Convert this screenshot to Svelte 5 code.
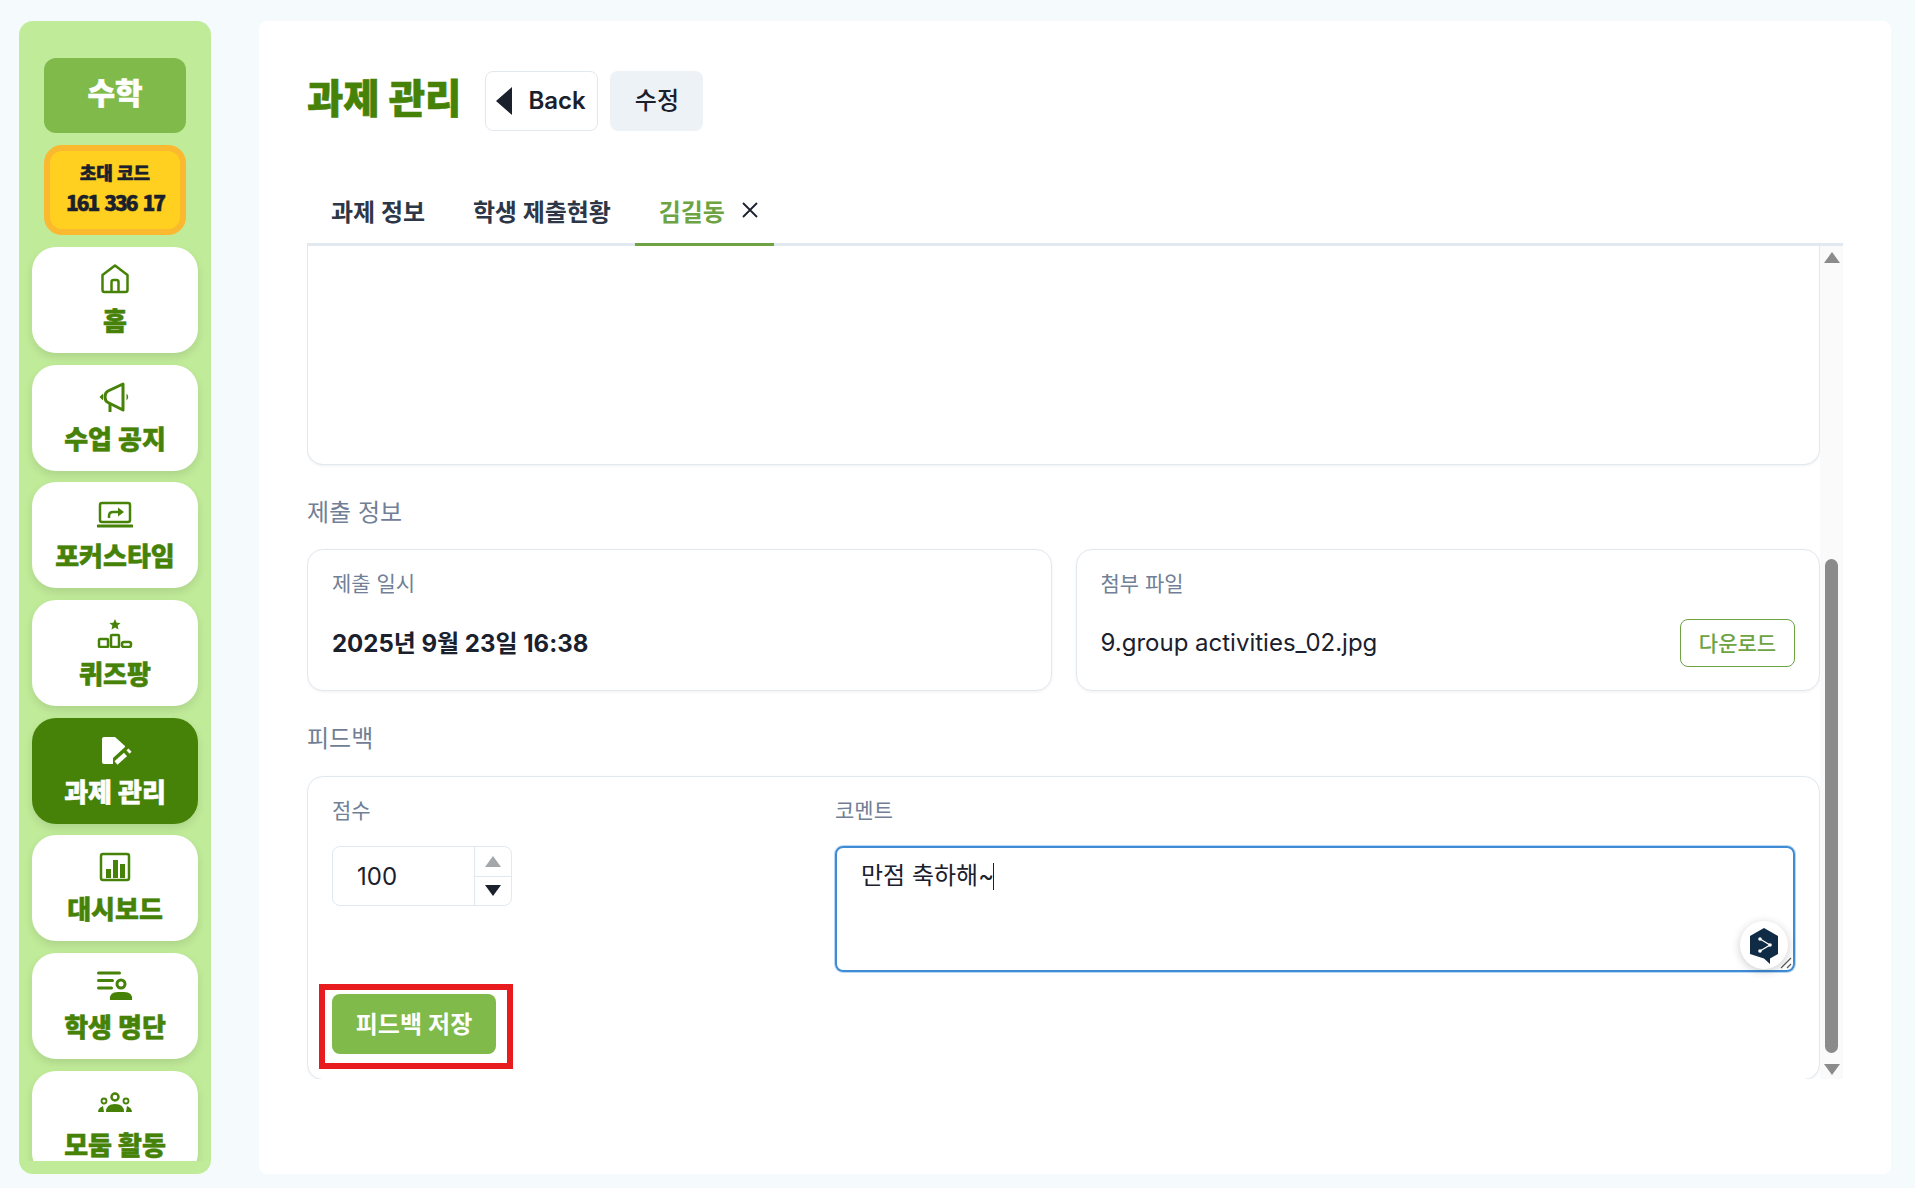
<script>
  const navItems = [
    { key: 'home', label: '홈' },
    { key: 'notice', label: '수업 공지' },
    { key: 'focus', label: '포커스타임' },
    { key: 'quiz', label: '퀴즈팡' },
    { key: 'task', label: '과제 관리', active: true },
    { key: 'dash', label: '대시보드' },
    { key: 'roster', label: '학생 명단' },
    { key: 'group', label: '모둠 활동' }
  ];
</script>

<div class="page">
  <aside class="sidebar">
    <div class="subject">수학</div>
    <div class="invite">
      <span class="invite-label">초대 코드</span>
      <span class="invite-code">161 336 17</span>
    </div>
    <nav class="nav">
      {#each navItems as item}
        <a class="nav-item" class:active={item.active} href="#{item.key}">
          <svg viewBox="0 0 36 32" width="36" height="32">
            {#if item.key === 'home'}
              <path class="line" d="M5.5 12 18 2.5 30.5 12v15q0 2-2 2h-21q-2 0-2-2z" />
              <path class="line" d="M14.5 29V19q0-2 2-2h3q2 0 2 2v10" />
            {:else if item.key === 'notice'}
              <path class="line heavy" d="M26 3 11 10q-3 1.500-3 6 0 4 3 5.500L26 29z" />
              <path class="line heavy" d="M13 22v9" />
              <path class="fill" d="M2.500 16l3.500-3.500v7zM29.500 12.500q3.500 3.500 0 7z" />
            {:else if item.key === 'focus'}
              <rect class="line" x="3" y="5" width="30" height="19" rx="2" />
              <path class="line thick" d="M1 28h34" />
              <path class="line" d="M12 20v-2q0-4 4-4h7" />
              <path class="fill" d="M21 9.500l6 4.500-6 4.500z" />
            {:else if item.key === 'quiz'}
              <path class="fill" d="M18 3l1.600 3.700 4 .3-3 2.600.9 3.900-3.500-2.100-3.500 2.100.9-3.900-3-2.600 4-.3z" />
              <rect class="line" x="2" y="23" width="9" height="8" rx="1" />
              <rect class="line" x="14" y="19" width="8" height="12" rx="1" />
              <rect class="line" x="25" y="26" width="9" height="5" rx="2" />
            {:else if item.key === 'task'}
              <path class="fill" d="M5 5q0-2 2-2h11l10 9v1L16 24v6H7q-2 0-2-2z" />
              <path class="line thick-white" d="M19 29 28.500 20.500" />
              <path class="line thick-white" d="M31 18 33 16.200" />
            {:else if item.key === 'dash'}
              <rect class="line" x="4" y="3" width="28" height="26" rx="2" />
              <path class="fill" d="M9 18h5v9H9zM16 9h5v18h-5zM23 13h5v14h-5z" />
            {:else if item.key === 'roster'}
              <path class="line round" d="M1.500 4h21M1.500 11.500h14M1.500 19h13" />
              <circle class="line heavy" cx="24" cy="15" r="4" />
              <path class="fill" d="M13 31q-1-8 8-8h6q9 0 8 8z" />
            {:else}
              <circle class="line" cx="18" cy="10" r="3.500" />
              <path class="fill" d="M9 25q0-8 9-8t9 8z" />
              <circle class="line slim" cx="7" cy="14" r="2.500" />
              <circle class="line slim" cx="29" cy="14" r="2.500" />
              <path class="fill" d="M1 25q0-4 5-6l1 6zM35 25q0-4-5-6l-1 6z" />
            {/if}
          </svg>
          <span>{item.label}</span>
        </a>
      {/each}
    </nav>
  </aside>

  <main class="main">
    <header class="header">
      <h1>과제 관리</h1>
      <button class="back">
        <svg viewBox="0 0 16 28" width="16" height="28"><path d="M16 0v28L0 14z" /></svg>
        <span>Back</span>
      </button>
      <button class="edit">수정</button>
    </header>

    <div class="tabs">
      <span class="tab">과제 정보</span>
      <span class="tab">학생 제출현황</span>
      <span class="tab current">
        김길동
        <svg viewBox="0 0 18 18" width="18" height="18"><path d="M2 2l14 14M16 2 2 16" /></svg>
      </span>
    </div>

    <div class="scroller">
      <div class="content">
        <div class="card answer"></div>

        <h2 class="section first">제출 정보</h2>
        <div class="info-grid">
          <div class="card info">
            <div class="field-label">제출 일시</div>
            <div class="info-row"><strong>2025년 9월 23일 16:38</strong></div>
          </div>
          <div class="card info">
            <div class="field-label">첨부 파일</div>
            <div class="info-row">
              <span>9.group activities_02.jpg</span>
              <button class="download">다운로드</button>
            </div>
          </div>
        </div>

        <h2 class="section">피드백</h2>
        <div class="card feedback">
          <div class="feedback-grid">
            <div>
              <div class="field-label">점수</div>
              <div class="number">
                <span class="number-value">100</span>
                <div class="spin">
                  <span class="spin-btn"><i class="up"></i></span>
                  <span class="spin-btn"><i class="down"></i></span>
                </div>
              </div>
            </div>
            <div>
              <div class="field-label">코멘트</div>
              <div class="comment">
                만점 축하해~<span class="caret"></span>
                <span class="deepl">
                  <svg viewBox="0 0 30 36" width="30" height="36">
                    <path d="M15 0 29 8v18l-8 4.500V36l-6-5.500L1 26V8z" fill="#0f2b46" />
                    <path d="M11 11l10 6L11 23" fill="none" stroke="#fff" stroke-width="1.300" />
                    <circle cx="11" cy="11" r="1.800" fill="#fff" />
                    <circle cx="21" cy="17" r="1.800" fill="#fff" />
                    <circle cx="11" cy="23" r="1.800" fill="#fff" />
                  </svg>
                </span>
                <svg class="grip" viewBox="0 0 12 12" width="12" height="12">
                  <path d="M1 11 11 1M7 11l4-4" />
                </svg>
              </div>
            </div>
          </div>
          <div class="save-wrap">
            <button class="save">피드백 저장</button>
            <span class="highlight"></span>
          </div>
        </div>
      </div>

      <div class="scrollbar">
        <i class="arrow-up"></i>
        <i class="thumb"></i>
        <i class="arrow-down"></i>
      </div>
    </div>
  </main>
</div>

<style>
  :global(body) {
    margin: 0;
    background: #f5fafd;
    font-family: Inter, "Noto Sans CJK KR", sans-serif;
    color: #1a202c;
  }

  .page {
    display: flex;
    gap: 48px;
    height: 1188px;
    padding: 21px 24px 14px 19px;
    box-sizing: border-box;
    overflow: hidden;
  }

  .sidebar {
    width: 192px;
    flex: none;
    background: #c0eb99;
    border-radius: 14px;
    padding: 37px 13px 13px;
    box-sizing: border-box;
    display: flex;
    flex-direction: column;
    font-family: "Noto Sans CJK KR", sans-serif;
    font-weight: 900;
    -webkit-text-stroke: 0.5px currentColor;
  }

  .subject {
    margin: 0 12px;
    height: 75px;
    padding-bottom: 10px;
    box-sizing: border-box;
    background: #7fba4a;
    border-radius: 12px;
    color: #fff;
    font-size: 30px;
    display: flex;
    align-items: center;
    justify-content: center;
  }

  .invite {
    margin: 12px;
    height: 90px;
    padding-bottom: 4px;
    box-sizing: border-box;
    background: #ffd020;
    border: 6px solid #fbb92f;
    border-radius: 18px;
    color: #1a202c;
    display: flex;
    flex-direction: column;
    align-items: center;
    justify-content: center;
  }

  .invite-label {
    font-size: 18px;
    line-height: 28px;
  }

  .invite-code {
    font-size: 21px;
    line-height: 32px;
    letter-spacing: -2px;
    word-spacing: 3px;
  }

  .nav {
    flex: 1;
    min-height: 0;
    overflow: hidden;
    display: flex;
    flex-direction: column;
    gap: 11.7px;
    margin: 0 -13px;
    padding: 0 13px;
  }

  .nav-item {
    flex: none;
    height: 106px;
    box-sizing: border-box;
    padding-top: 16px;
    background: #fff;
    border-radius: 24px;
    box-shadow: 0 4px 8px rgba(0, 0, 0, 0.1);
    color: #468207;
    font-size: 26px;
    line-height: 36px;
    text-decoration: none;
    display: flex;
    flex-direction: column;
    align-items: center;
    gap: 7px;
  }

  .nav-item.active {
    background: #468207;
    color: #fff;
  }

  .nav-item svg {
    flex: none;
  }

  .line {
    fill: none;
    stroke: currentColor;
    stroke-width: 2.5;
    stroke-linejoin: round;
  }

  .line.heavy {
    stroke-width: 3;
  }

  .line.thick {
    stroke-width: 3;
    stroke-linecap: round;
  }

  .line.round {
    stroke-width: 3;
    stroke-linecap: round;
  }

  .line.slim {
    stroke-width: 1.8;
  }

  .line.thick-white {
    stroke-width: 4.5;
  }

  .fill {
    fill: currentColor;
  }

  .main {
    flex: 1;
    min-width: 0;
    background: #fff;
    border-radius: 8px;
    padding: 50px 48px 0;
    box-sizing: border-box;
  }

  .header {
    display: flex;
    align-items: center;
    height: 60px;
  }

  h1 {
    margin: 0 24px 0 0;
    color: #468207;
    font-family: "Noto Sans CJK KR", sans-serif;
    font-size: 39.5px;
    font-weight: 900;
    line-height: 60px;
    -webkit-text-stroke: 0.6px currentColor;
    position: relative;
    top: -5px;
  }

  button {
    font-family: Inter, "Noto Sans CJK KR", sans-serif;
    color: #1a202c;
    cursor: pointer;
  }

  .back {
    width: 113px;
    height: 60px;
    background: #fff;
    border: 1px solid #e2e8f0;
    border-radius: 8px;
    font-size: 24px;
    font-weight: 600;
    display: flex;
    align-items: center;
    gap: 16px;
    padding: 0 0 0 10px;
    margin-right: 12px;
  }

  .back span {
    padding-bottom: 2px;
  }

  .back svg {
    fill: #1a202c;
  }

  .edit {
    width: 93px;
    height: 60px;
    background: #edf2f7;
    border: 0;
    border-radius: 8px;
    font-size: 24px;
    font-weight: 500;
    padding: 0 0 6px;
  }

  .tabs {
    display: flex;
    margin-top: 47px;
    height: 68px;
    box-sizing: border-box;
    border-bottom: 3px solid #e2e8f0;
  }

  .tab {
    padding: 0 24px 4px;
    height: 68px;
    box-sizing: border-box;
    font-size: 24px;
    font-weight: 600;
    letter-spacing: -0.1px;
    display: flex;
    align-items: center;
    gap: 16px;
    color: #2d3748;
  }

  .tab.current {
    color: #6da343;
    padding: 0 15px 1px 24px;
    border-bottom: 3px solid #6da343;
  }

  .tab svg {
    fill: none;
    stroke: #1a202c;
    stroke-width: 1.8;
  }

  .scroller {
    display: flex;
    height: 833px;
    overflow: hidden;
  }

  .content {
    width: 1513px;
    flex: none;
  }

  .card {
    background: #fff;
    border: 1px solid #e2e8f0;
    border-radius: 16px;
    box-shadow: 0 1px 3px rgba(0, 0, 0, 0.06);
    box-sizing: border-box;
  }

  .answer {
    height: 219px;
    border-top: 0;
    border-radius: 0 0 16px 16px;
  }

  .section {
    margin: 30px 0 19px;
    color: #718096;
    font-size: 24px;
    font-weight: 400;
    line-height: 36px;
  }

  .section.first {
    margin-bottom: 18px;
  }

  .info-grid {
    display: grid;
    grid-template-columns: 1fr 1fr;
    gap: 24px;
  }

  .info {
    height: 142px;
    padding: 18px 24px 24px;
  }

  .field-label {
    color: #718096;
    font-size: 21px;
    line-height: 32px;
  }

  .info-row {
    margin-top: 19px;
    height: 48px;
    display: flex;
    align-items: center;
    justify-content: space-between;
    font-size: 24px;
  }

  .info-row strong {
    font-weight: 700;
    padding-bottom: 4px;
  }

  .info-row span {
    padding-bottom: 2px;
  }

  .download {
    width: 115px;
    height: 48px;
    background: #fff;
    border: 1px solid #6da343;
    border-radius: 8px;
    color: #6da343;
    font-size: 21px;
    font-weight: 500;
    padding: 0 0 2px;
  }

  .feedback {
    height: 304px;
    padding: 18px 24px 24px;
  }

  .feedback-grid {
    display: grid;
    grid-template-columns: 479px 1fr;
    gap: 24px;
  }

  .number {
    margin-top: 19px;
    width: 180px;
    height: 60px;
    box-sizing: border-box;
    border: 1px solid #e2e8f0;
    border-radius: 8px;
    display: flex;
    align-items: center;
    justify-content: space-between;
    padding-left: 24px;
    font-size: 24px;
  }

  .spin {
    width: 36px;
    height: 100%;
    border-left: 1px solid #e2e8f0;
    display: flex;
    flex-direction: column;
  }

  .spin-btn {
    flex: 1;
    display: flex;
    align-items: center;
    justify-content: center;
  }

  .spin-btn + .spin-btn {
    border-top: 1px solid #e2e8f0;
  }

  .up,
  .down {
    width: 0;
    height: 0;
    border-left: 8px solid transparent;
    border-right: 8px solid transparent;
  }

  .up {
    border-bottom: 11px solid #a4a7aa;
  }

  .down {
    border-top: 11px solid #1a202c;
  }

  .comment {
    position: relative;
    margin-top: 19px;
    height: 126px;
    box-sizing: border-box;
    border: 2px solid #3f8bd6;
    border-radius: 8px;
    box-shadow: 0 0 0 1px rgba(63, 139, 214, 0.35);
    padding: 10px 24px;
    font-size: 24px;
    line-height: 36px;
  }

  .caret {
    display: inline-block;
    width: 1px;
    height: 27px;
    margin-left: -1px;
    background: #1a202c;
    vertical-align: -6px;
  }

  .deepl {
    position: absolute;
    right: 5px;
    bottom: 1px;
    width: 48px;
    height: 48px;
    border-radius: 50%;
    background: #fff;
    box-shadow: 0 2px 10px rgba(0, 0, 0, 0.2);
    display: flex;
    align-items: center;
    justify-content: center;
    padding-top: 2px;
    box-sizing: border-box;
  }

  .grip {
    position: absolute;
    right: 1px;
    bottom: 1px;
    fill: none;
    stroke: #555;
    stroke-width: 1.2;
  }

  .save-wrap {
    position: relative;
    width: 164px;
    margin-top: 22px;
  }

  .save {
    display: block;
    width: 164px;
    height: 60px;
    border: 0;
    border-radius: 8px;
    background: #7fba4a;
    color: #fff;
    font-size: 24px;
    font-weight: 600;
    padding: 0 0 4px;
  }

  .highlight {
    position: absolute;
    inset: -10px -17px -15px -13px;
    border: 6px solid #e81c1f;
    pointer-events: none;
  }

  .scrollbar {
    flex: 1;
    height: 833px;
    background: #fafafa;
    display: flex;
    flex-direction: column;
    align-items: center;
  }

  .arrow-up,
  .arrow-down {
    width: 0;
    height: 0;
    border-left: 8px solid transparent;
    border-right: 8px solid transparent;
  }

  .arrow-up {
    margin-top: 6px;
    border-bottom: 11px solid #8b8b8b;
  }

  .thumb {
    width: 13px;
    height: 494px;
    margin-top: 296px;
    border-radius: 7px;
    background: #8b8b8b;
  }

  .arrow-down {
    margin-top: 11px;
    border-top: 11px solid #8b8b8b;
  }
</style>
